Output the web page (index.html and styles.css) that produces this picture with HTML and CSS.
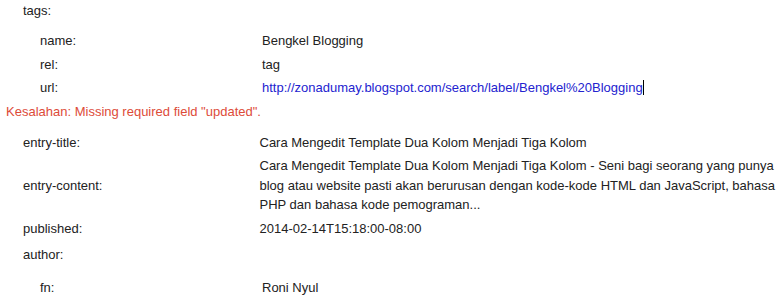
FILE: index.html
```html
<!DOCTYPE html>
<html lang="id">
<head>
<meta charset="utf-8">
<title>Structured data</title>
<link rel="stylesheet" href="styles.css">
</head>
<body>
<div class="sheet">
  <div class="row row-first">
    <div class="label">tags:</div>
    <div class="value"></div>
  </div>
  <div class="group">
    <div class="row">
      <div class="label">name:</div>
      <div class="value">Bengkel Blogging</div>
    </div>
    <div class="row">
      <div class="label">rel:</div>
      <div class="value">tag</div>
    </div>
    <div class="row">
      <div class="label">url:</div>
      <div class="value"><a class="link" href="#">http://zonadumay.blogspot.com/search/label/Bengkel%20Blogging</a><span class="caret"></span></div>
    </div>
  </div>
  <div class="error">Kesalahan: Missing required field "updated".</div>
  <div class="row row-after-error">
    <div class="label">entry-title:</div>
    <div class="value">Cara Mengedit Template Dua Kolom Menjadi Tiga Kolom</div>
  </div>
  <div class="row">
    <div class="label">entry-content:</div>
    <div class="value">Cara Mengedit Template Dua Kolom Menjadi Tiga Kolom - Seni bagi seorang yang punya blog atau website pasti akan berurusan dengan kode-kode HTML dan JavaScript, bahasa PHP dan bahasa kode pemograman...</div>
  </div>
  <div class="row">
    <div class="label">published:</div>
    <div class="value">2014-02-14T15:18:00-08:00</div>
  </div>
  <div class="row row-author">
    <div class="label">author:</div>
    <div class="value"></div>
  </div>
  <div class="group group-author">
    <div class="row">
      <div class="label">fn:</div>
      <div class="value">Roni Nyul</div>
    </div>
  </div>
</div>
</body>
</html>
```

FILE: styles.css
```css
html, body {
  margin: 0;
  padding: 0;
  background: #fff;
}

body {
  font-family: "Liberation Sans", Arial, sans-serif;
  font-size: 13px;
  line-height: 19.5px;
  color: #222;
}

.sheet {
  width: 776px;
}

.row {
  display: grid;
  grid-template-columns: 236.5px 1fr;
  padding: 2px 0 2px 23px;
}

.row-first {
  padding-top: 0.5px;
}

.label {
  align-self: center;
}

.value {
  min-height: 19.5px;
}

.group {
  margin-top: 7px;
}

.group .row {
  padding-left: 40px;
  grid-template-columns: 222px 1fr;
}

.group-author {
  margin-top: 9px;
}

.row-author {
  margin-top: 3px;
}

.link {
  color: #2323cf;
  text-decoration: none;
}

.caret {
  display: inline-block;
  width: 1px;
  height: 15px;
  background: #000;
  vertical-align: -3px;
}

.error {
  color: #dd4b39;
  padding: 2px 0 2px 6px;
}

.row-after-error {
  margin-top: 7.5px;
}
```
